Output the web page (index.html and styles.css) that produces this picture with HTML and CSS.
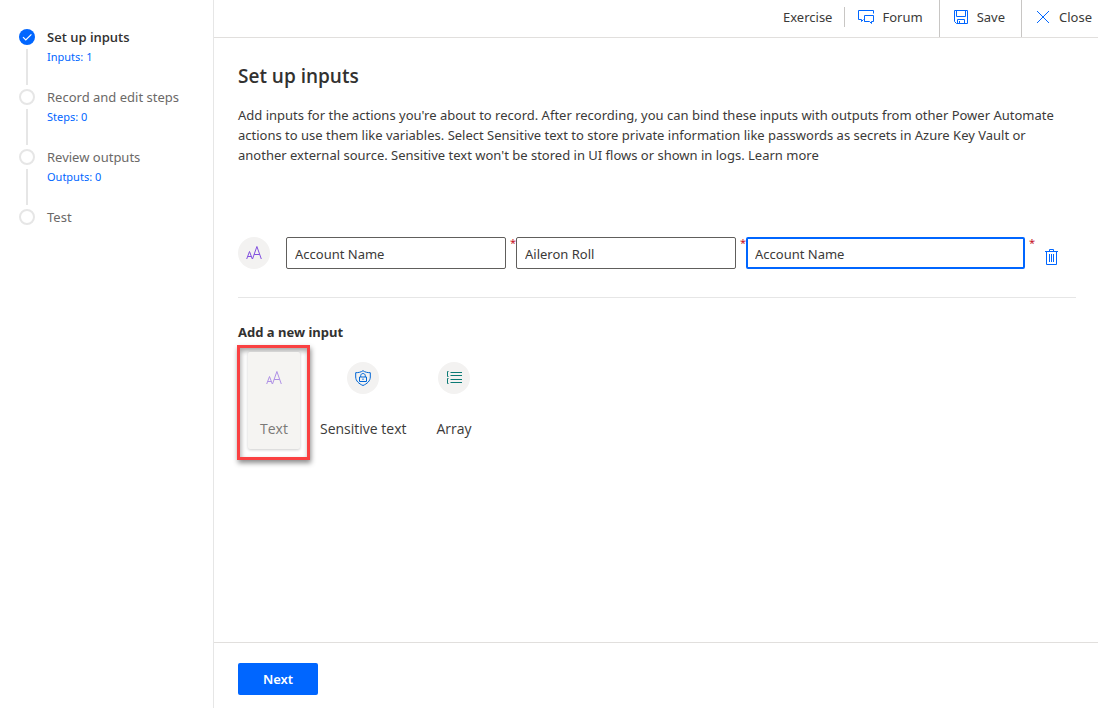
FILE: index.html
```html
<!DOCTYPE html>
<html lang="en">
<head>
<meta charset="utf-8">
<meta name="viewport" content="width=device-width, initial-scale=1">
<title>Set up inputs</title>
<link rel="stylesheet" href="styles.css">
</head>
<body>
<div class="app">
  <nav class="sidebar" aria-label="Steps">
    <ol class="steps">
      <li class="step step-current">
        <span class="step-track"><svg class="step-dot" viewBox="0 0 16 16" aria-hidden="true"><circle cx="8" cy="8" r="8" fill="#0066ff"/><path d="M4 8.2l2.8 2.8L12.400 5.400" fill="none" stroke="#fff" stroke-width="1.2"/></svg><span class="step-line"></span></span>
        <div class="step-body"><div class="step-title">Set up inputs</div><div class="step-info">Inputs: 1</div></div>
      </li>
      <li class="step">
        <span class="step-track"><span class="step-dot step-empty"></span><span class="step-line"></span></span>
        <div class="step-body"><div class="step-title">Record and edit steps</div><div class="step-info">Steps: 0</div></div>
      </li>
      <li class="step">
        <span class="step-track"><span class="step-dot step-empty"></span><span class="step-line"></span></span>
        <div class="step-body"><div class="step-title">Review outputs</div><div class="step-info">Outputs: 0</div></div>
      </li>
      <li class="step">
        <span class="step-track"><span class="step-dot step-empty"></span></span>
        <div class="step-body"><div class="step-title">Test</div></div>
      </li>
    </ol>
  </nav>
  <div class="page">
    <header class="topbar">
      <span class="flow-name">Exercise</span>
      <button class="command" type="button">
        <svg class="command-icon" viewBox="0 0 16 16" aria-hidden="true"><path d="M5.500 10.500L3.500 12.500V10.500H.5V1.500H15.500V4.500M7.500 12.500H6.500V6.500H15.500V12.500H13.500V14.500L11.500 12.500H6.500"/></svg>
        Forum
      </button>
      <button class="command command-ruled" type="button">
        <svg class="command-icon" viewBox="0 0 16 16" aria-hidden="true"><path d="M1.500 1.500H14.500V14.500H3.500L1.500 12.500ZM3.500 1.500V7.500H12.500V1.500M4.500 14.500V10.500H11.500V14.500M6.500 12V14.500"/></svg>
        Save
      </button>
      <button class="command command-ruled" type="button">
        <svg class="command-icon" viewBox="0 0 16 16" aria-hidden="true"><path d="M2 2L14 14M14 2L2 14"/></svg>
        Close
      </button>
    </header>
    <main class="content">
      <h1 class="title">Set up inputs</h1>
      <p class="intro">Add inputs for the actions you're about to record. After recording, you can bind these inputs with outputs from other Power Automate actions to use them like variables. Select Sensitive text to store private information like passwords as secrets in Azure Key Vault or another external source. Sensitive text won't be stored in UI flows or shown in logs. <a class="learn" href="#learn">Learn more</a></p>
      <form class="input-row">
        <span class="badge badge-row"><svg class="badge-icon text-icon" viewBox="0 0 16 16" aria-hidden="true"><path d="M.7 14L3.500 6.500L6.300 14M1.700 11.500H5.300M6.500 14L10.900 1.500L15.300 14M8.100 9.500H13.700"/></svg></span>
        <label class="field"><input class="box" type="text" value="Account Name" aria-label="Input name" required><span class="required">*</span></label>
        <label class="field"><input class="box" type="text" value="Aileron Roll" aria-label="Sample value" required><span class="required">*</span></label>
        <label class="field field-wide"><input class="box box-active" type="text" value="Account Name" aria-label="Description" required><span class="required">*</span></label>
        <button class="delete" type="button" aria-label="Delete input"><svg class="delete-icon" viewBox="0 0 16 16" aria-hidden="true"><path d="M2 2.500H15M6.500 2.500V.5H10.500V2.500M3.500 2.500V15.500H13.500V2.500M6.500 5V13M8.500 5V13M10.500 5V13"/></svg></button>
      </form>
      <h2 class="subtitle">Add a new input</h2>
      <div class="types">
        <div class="callout">
          <button class="type type-text" type="button">
            <span class="badge badge-clear"><svg class="badge-icon text-icon" viewBox="0 0 16 16" aria-hidden="true"><path d="M.7 14L3.500 6.500L6.300 14M1.700 11.500H5.300M6.500 14L10.900 1.500L15.300 14M8.100 9.500H13.700"/></svg></span>
            Text
          </button>
        </div>
        <button class="type" type="button">
          <span class="badge"><svg class="badge-icon shield-icon" viewBox="0 0 16 16" aria-hidden="true"><path d="M8 .7C6 2.200 3.500 2.700 .7 2.700V7C.7 11 4 13.800 8 15.500C12 13.800 15.300 11 15.300 7V2.700C12.500 2.700 10 2.200 8 .7ZM4.500 7H11.500V11.500H4.500ZM5.700 7V5.700C5.700 2.800 10.300 2.800 10.300 5.700V7M8 8.500V10"/></svg></span>
          Sensitive text
        </button>
        <button class="type" type="button">
          <span class="badge"><svg class="badge-icon array-icon" viewBox="0 0 16 16" aria-hidden="true"><path d="M2.500 1.500H1.500V6.500H2.500M2.500 8.500H1.500V13.500H2.500M4.500 2.500H16M4.500 5.500H16M4.500 9.500H16M4.500 12.500H16"/></svg></span>
          Array
        </button>
      </div>
    </main>
    <footer class="footer"><button class="next" type="button">Next</button></footer>
  </div>
</div>
</body>
</html>
```
FILE: styles.css
```css
* { box-sizing: border-box; }
body { margin: 0; background: #fff; color: #3b3a39; font: 13px/20px "Noto Sans", "Open Sans", sans-serif; }
button, input { font: inherit; color: inherit; }
button { background: none; border: 0; padding: 0; cursor: pointer; }
svg { display: block; fill: none; }

.app { display: flex; min-height: 100vh; }
.sidebar { flex: 0 0 214px; border-right: 1px solid #e6e6e6; padding: 27px 16px 0 19px; }
.steps { list-style: none; margin: 0; padding: 0; }
.step { display: flex; gap: 12px; min-height: 60px; color: #6b6967; }
.step-current .step-title { color: #323130; font-family: "Open Sans", sans-serif; font-weight: 600; }
.step-track { display: flex; flex-direction: column; align-items: center; gap: 4px; padding: 2px 0; }
.step-dot { width: 16px; height: 16px; flex: none; }
.step-empty { border: 2px solid #e6e6e6; border-radius: 50%; }
.step-line { flex: 1; width: 2px; background: #e6e6e6; }
.step-info { color: #0066ff; font-size: 11px; }

.page { flex: 1; min-width: 0; display: flex; flex-direction: column; }
.topbar { display: flex; justify-content: flex-end; height: 38px; border-bottom: 1px solid #e1dfdd; }
.flow-name { align-self: flex-start; margin: 7px 0; padding-right: 12px; border-right: 1px solid #c8c6c4; }
.command { display: flex; align-items: center; gap: 8px; padding: 0 16px 3px 13px; white-space: nowrap; }
.command-ruled { border-left: 1px solid #c8c6c4; }
.command:last-child { padding-right: 6px; }
.command-icon { width: 16px; height: 16px; stroke: #0066ff; stroke-width: 1; }

.content { flex: 1; padding: 25px 22px 24px 24px; }
.title { margin: 0; color: #323130; font: 600 19px/26px "Open Sans", sans-serif; }
.intro { margin: 16px 0 0; }
.learn { color: inherit; text-decoration: none; }
.input-row { display: flex; align-items: flex-start; margin-top: 72px; padding-bottom: 28px; border-bottom: 1px solid #e6e6e6; }
.badge { display: flex; align-items: center; justify-content: center; flex: none; width: 32px; height: 32px; border-radius: 50%; background: #f3f2f1; }
.badge-row { margin-right: 16px; }
.badge-clear { background: none; }
.badge-icon { width: 16px; height: 16px; stroke-width: 1; }
.text-icon { stroke: #8250df; }
.shield-icon { stroke: #0066d6; }
.array-icon { stroke: #0b7a75; }
.field { display: flex; flex: 230 1 0; min-width: 0; }
.field-wide { flex-grow: 289; }
.box { flex: 1; min-width: 0; height: 32px; padding: 2px 8px 0; border: 1px solid #605e5c; border-radius: 2px; background: #fff; outline: 0; }
.box-active { border: 2px solid #0066ff; padding: 1px 7px 0; }
.required { flex: 0 0 10px; padding-left: 4px; color: #c50f1f; font-size: 11px; line-height: 12px; }
.delete { flex: none; margin: 12px 17px 0 8px; }
.delete-icon { width: 16px; height: 16px; stroke: #0066ff; }

.subtitle { margin: 24px 0 0; color: #323130; font-size: 13px; line-height: 20px; font-weight: 700; }
.types { display: flex; align-items: flex-start; margin-left: -1px; padding-top: 3px; }
.callout { padding: 4px 7px 8px 8px; border: 3px solid #fa4142; box-shadow: 1px 3px 5px rgba(0, 0, 0, .45), inset 1px 3px 5px rgba(0, 0, 0, .35); }
.type { display: flex; flex-direction: column; align-items: center; justify-content: space-between; height: 97px; margin: 7px 10px 0 0; padding: 10px; font-family: "Open Sans", sans-serif; font-size: 14px; white-space: nowrap; }
.type-text { width: 52px; margin: 0; background: #f5f4f2; border-radius: 2px; box-shadow: 0 1px 3px rgba(0, 0, 0, .2); color: #7a7977; }
.type-text .text-icon { opacity: .6; }

.footer { padding: 20px 24px 13px; border-top: 1px solid #e1dfdd; }
.next { width: 80px; height: 32px; border-radius: 2px; background: #0066ff; color: #fff; font-weight: 600; }
```
